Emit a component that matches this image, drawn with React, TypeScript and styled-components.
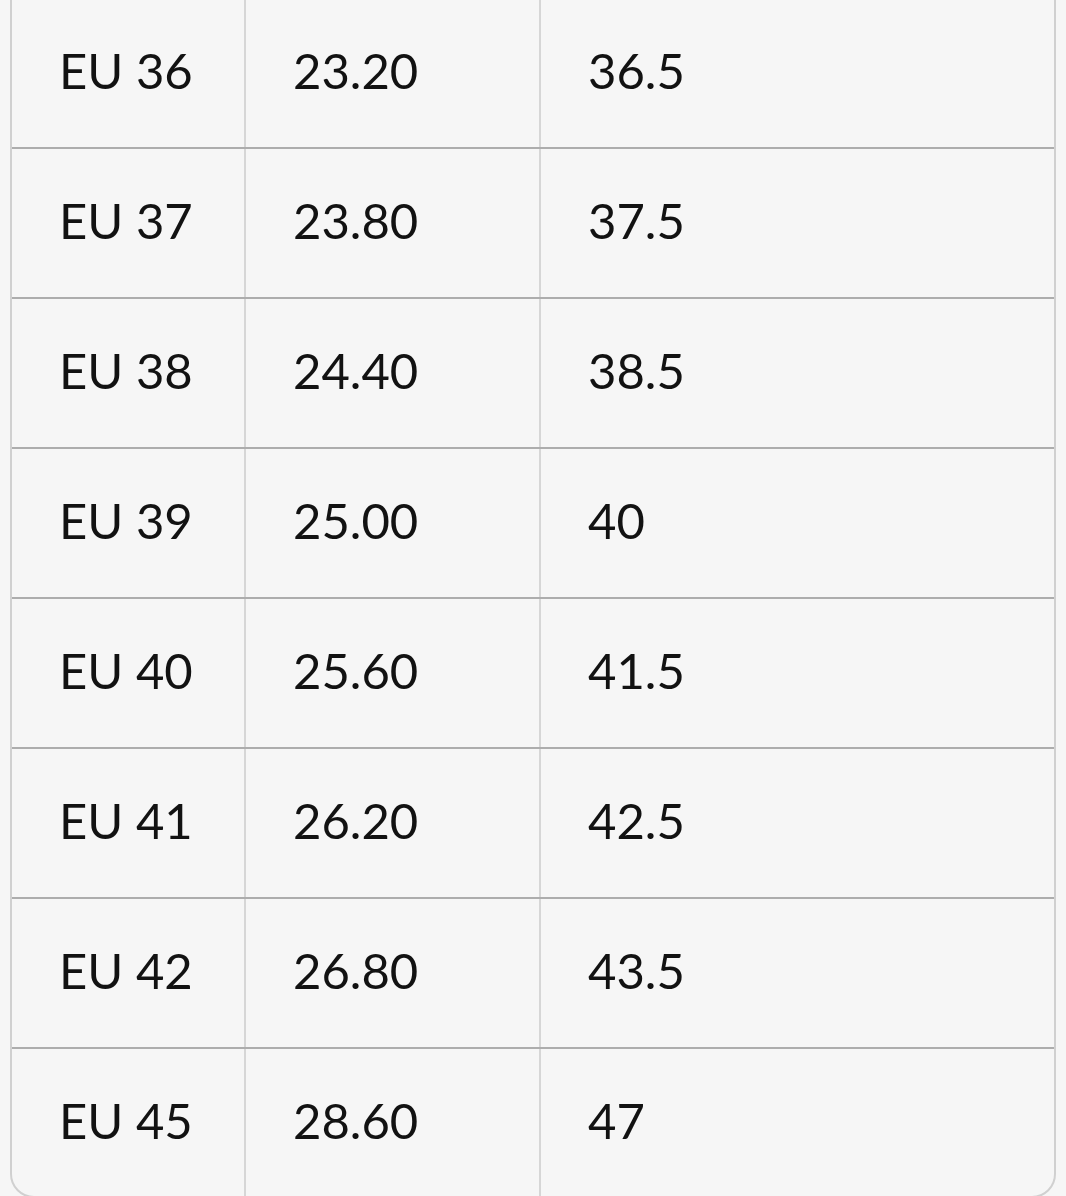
import styled, { createGlobalStyle } from "styled-components";

const GlobalStyle = createGlobalStyle`
  html, body {
    margin: 0;
    padding: 0;
    background: #f6f6f6;
    overflow: hidden;
  }
`;

const rows = [
  ["EU 36", "23.20", "36.5"],
  ["EU 37", "23.80", "37.5"],
  ["EU 38", "24.40", "38.5"],
  ["EU 39", "25.00", "40"],
  ["EU 40", "25.60", "41.5"],
  ["EU 41", "26.20", "42.5"],
  ["EU 42", "26.80", "43.5"],
  ["EU 45", "28.60", "47"],
];

export default function App() {
  return (
    <>
      <GlobalStyle />
      <SizeTable>
        {rows.map((r, i) => (
          <Row key={r[0]} last={i === rows.length - 1}>
            <Cell>{r[0]}</Cell>
            <Cell>{r[1]}</Cell>
            <Cell noDivider>{r[2]}</Cell>
          </Row>
        ))}
      </SizeTable>
    </>
  );
}

const SizeTable = styled.div`
  margin: -3px 10px 0 10px;
  border: 2px solid #d0d0d0;
  border-radius: 0 0 24px 24px;
  background: #f6f6f6;
  overflow: hidden;
`;

const Row = styled.div.withConfig({ shouldForwardProp: (p) => p !== "last" })<{ last?: boolean }>`
  display: grid;
  grid-template-columns: 234px 295px 1fr;
  height: ${(p) => (p.last ? "147px" : "150px")};
  box-sizing: border-box;
  border-bottom: ${(p) => (p.last ? "none" : "2px solid #adadad")};
`;

const Cell = styled.div.withConfig({ shouldForwardProp: (p) => p !== "noDivider" })<{ noDivider?: boolean }>`
  display: flex;
  align-items: center;
  padding: 0 0 6px 47px;
  box-sizing: border-box;
  border-right: ${(p) => (p.noDivider ? "none" : "2px solid #d6d6d6")};
  font-family: Lato, "Noto Sans", sans-serif;
  font-size: 49px;
  color: #121212;
`;
